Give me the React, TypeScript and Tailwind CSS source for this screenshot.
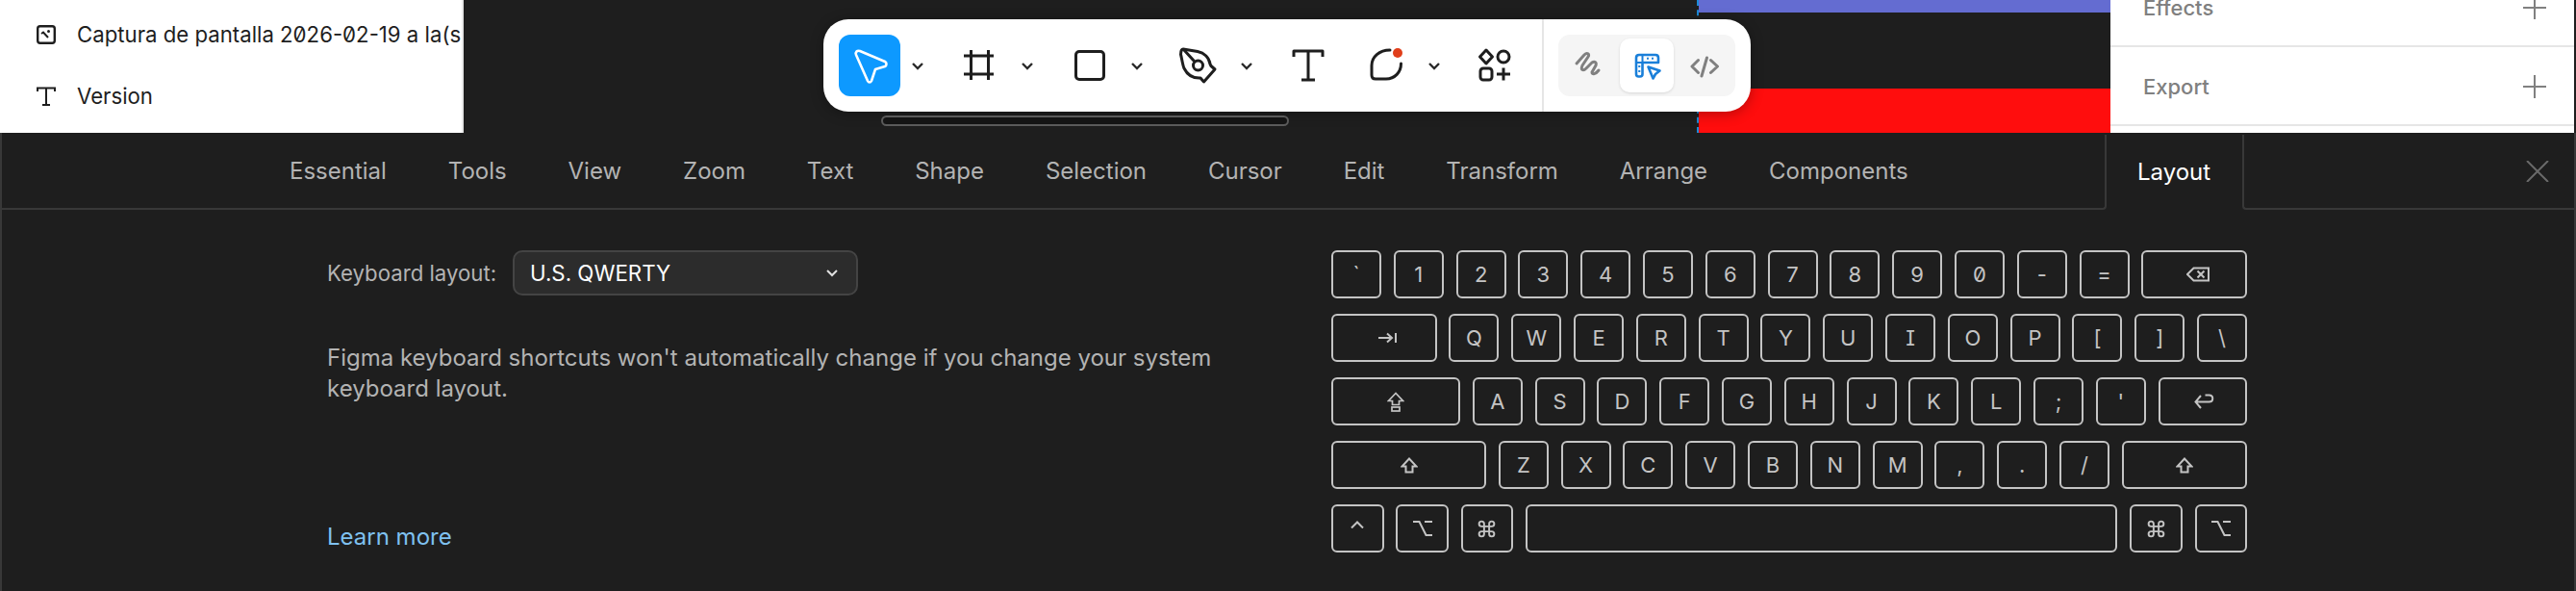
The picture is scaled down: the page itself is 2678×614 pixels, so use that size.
import type { ReactNode } from "react";

const keyFont = "[font-feature-settings:'zero','ss02','cv08']";

const Chevron = ({ stroke = "#2a2a2a", weight = "2.4" }: { stroke?: string; weight?: string }) => (
  <svg width="14" height="9" viewBox="0 0 14 9" fill="none" stroke={stroke} strokeWidth={weight}>
    <path d="M2 2 7 7l5-5" />
  </svg>
);

// 64px toolbar icon box
const ToolIcon = ({ children, stroke = "#1e1e1e" }: { children: ReactNode; stroke?: string }) => (
  <svg width="64" height="64" viewBox="0 0 64 64" fill="none" stroke={stroke} strokeWidth="3" strokeLinecap="round" strokeLinejoin="round">
    {children}
  </svg>
);

const Tool = ({ children, active, chevron }: { children: ReactNode; active?: boolean; chevron?: boolean }) => (
  <div className="flex items-center">
    <div className={`size-16 rounded-[12px] ${active ? "bg-[#0d99ff]" : ""}`}>{children}</div>
    {chevron && (
      <div className="flex w-9 justify-center">
        <Chevron />
      </div>
    )}
  </div>
);

const Toolbar = () => (
  <div className="absolute left-[856px] top-[20px] flex h-[96px] w-[964px] items-center gap-[14px] rounded-[26px] bg-white pl-4 shadow-[0_2px_14px_rgba(0,0,0,0.3)]">
    <Tool active chevron>
      <ToolIcon stroke="#ffffff">
        <path strokeWidth="2.600" d="M18 21c-1-3 1-5 4-4l26 11c2 1 2 4 0 5l-10 3-4 12c-1 2-3 2-4 0z" />
      </ToolIcon>
    </Tool>
    <Tool chevron>
      <ToolIcon>
        <path strokeLinecap="butt" d="M23.500 16v31M41.500 16v31M16 22h31M16 41h31" />
      </ToolIcon>
    </Tool>
    <Tool chevron>
      <ToolIcon>
        <rect x="18.500" y="17.500" width="29" height="29" rx="3.500" />
      </ToolIcon>
    </Tool>
    <Tool chevron>
      <ToolIcon>
        <path d="M16 15l15 2.500c7 1.500 12 6.500 13 13l1 2 4 3.500-11.500 13-3.500-4c-8 .5-14-4-17-10-1.500-3-2.500-11-3.500-14.500 0-3 1-5.500 2.500-5.500z" />
        <path d="M17 16l10 11" />
        <circle cx="31.500" cy="32" r="5" />
      </ToolIcon>
    </Tool>
    <Tool>
      <ToolIcon>
        <path strokeLinecap="butt" d="M17 23v-6h30v6M32 17v30M25 47h14" />
      </ToolIcon>
    </Tool>
    <div className="ml-[3px]">
      <Tool chevron>
        <ToolIcon>
          <path d="M36 16c-11 0-19 7-19 16v10q0 4 4 4h11c9 0 15.500-7 15.500-16" />
          <circle cx="44" cy="19" r="5" fill="#e03e1a" stroke="none" />
        </ToolIcon>
      </Tool>
    </div>
    <Tool>
      <ToolIcon>
        <path d="M22 16l6.500 7-6.500 7-6.500-7z" />
        <circle cx="40" cy="23" r="6" />
        <rect x="16" y="35" width="12" height="12" rx="3" />
        <path strokeLinecap="butt" d="M40 34.500v13M33 41h14" />
      </ToolIcon>
    </Tool>
    <div className="ml-[2px] h-full w-[2px] bg-[#e6e6e6]" />
    <div className="ml-px flex h-16 w-[184px] items-center rounded-[12px] bg-[#f5f5f5]">
      <div className="w-16">
        <ToolIcon stroke="#808080">
          <path d="M19 30l8-9c3-3 6-1 4 2l-6 9c-2 5 1 6 4 3l6-6c3-2 5 0 4 3l-4 7c0 3 4 2 7-2" />
        </ToolIcon>
      </div>
      <div className="flex h-14 w-14 items-center justify-center rounded-[10px] bg-white shadow-[0_1px_3px_rgba(0,0,0,0.12)]">
        <svg width="56" height="56" viewBox="0 0 56 56" fill="none" stroke="#1a7fd9" strokeWidth="2.600" strokeLinecap="round" strokeLinejoin="round">
          <path d="M20 17h17q3 0 3 3v5H23.500v12q0 2.500-2.500 2.500h-1.500q-2.500 0-2.500-2.500V20q0-3 3-3z" />
          <path strokeWidth="2" d="M29 20.500v.5M34 20.500v.5M20 29h.5M20 34h.5M23.500 17v8M17 25h6.500" />
          <path fill="#ffffff" d="M29.500 29.500l12 4-4.500 3.500-2.500 4.500z" />
        </svg>
      </div>
      <div className="w-16">
        <ToolIcon stroke="#808080">
          <path d="M25.500 26.500 19 33l6.500 6.500M38.500 26.500 45.500 33l-7 6.500M34.500 24 29 43" />
        </ToolIcon>
      </div>
    </div>
  </div>
);

const LayerRow = ({ icon, label }: { icon: ReactNode; label: string }) => (
  <div className="flex h-16 items-center gap-[22px] pl-[38px]">
    {icon}
    <span>{label}</span>
  </div>
);

const PanelRow = ({ label, first }: { label: string; first?: boolean }) => (
  <div className={`flex h-[82px] shrink-0 items-center justify-between border-b-2 border-[#e6e6e6] pl-[34px] pr-[29px] pt-[2px] ${first ? "-mt-[33px]" : ""}`}>
    <span>{label}</span>
    <svg width="24" height="24" viewBox="0 0 24 24" stroke="#808080" strokeWidth="2">
      <path d="M12 0v24M0 12h24" />
    </svg>
  </div>
);

const tabs = ["Essential", "Tools", "View", "Zoom", "Text", "Shape", "Selection", "Cursor", "Edit", "Transform", "Arrange", "Components"];

const KeySvg = ({ w, h, children, className }: { w: number; h: number; children: ReactNode; className?: string }) => (
  <svg width={w} height={h} viewBox={`0 0 ${w} ${h}`} fill="none" stroke="currentColor" strokeWidth="2" className={className}>
    {children}
  </svg>
);

const ShiftIcon = () => (
  <KeySvg w={18} h={17}>
    <path d="M9 1.500 1.500 9.500H5.500V15.500H12.500V9.500H16.500z" />
  </KeySvg>
);

const CapsIcon = () => (
  <svg width="18" height="21" viewBox="0 0 18 21" fill="none" stroke="currentColor" strokeWidth="1.700">
    <path d="M9 1.500 1.500 9.500H5.500V13.500H12.500V9.500H16.500z" />
    <rect x="5" y="16" width="8" height="4" />
  </svg>
);

const OptionIcon = () => (
  <KeySvg w={20} h={18}>
    <path d="M0 2h6.500l7 14H20M12 2h8" />
  </KeySvg>
);

const CommandIcon = () => (
  <svg width="21" height="21" viewBox="0 0 24 24" fill="none" stroke="currentColor" strokeWidth="2.200">
    <path d="M15 6v12a3 3 0 1 0 3-3H6a3 3 0 1 0 3 3V6a3 3 0 1 0-3 3h12a3 3 0 1 0-3-3" />
  </svg>
);

const Key = ({ children, className = "w-[52px]" }: { children?: ReactNode; className?: string }) => (
  <div className={`flex h-[50px] items-center justify-center rounded-[6px] border-2 border-[#c4c4c4] text-[22px] leading-none ${className}`}>
    {children}
  </div>
);

const KeyRow = ({ chars }: { chars: string }) => (
  <>
    {chars.split("").map((c) => (
      <Key key={c}>{c}</Key>
    ))}
  </>
);

const Keyboard = () => (
  <div className={`flex w-[952px] flex-col gap-4 text-[#c4c4c4] ${keyFont}`}>
    <div className="flex gap-[12.8px]">
      <KeyRow chars="`1234567890-=" />
      <Key className="flex-1">
        <KeySvg w={24} h={16} className="ml-2">
          <path d="M7.500 1.500H23V14.500H7.500L1 8zM11.500 4.500l7 7M18.500 4.500l-7 7" />
        </KeySvg>
      </Key>
    </div>
    <div className="flex gap-[12.8px]">
      <Key className="flex-1">
        <KeySvg w={20} h={12} className="ml-2">
          <path d="M0 6h14M9 1.500 14 6l-5 4.500M18 1v10" />
        </KeySvg>
      </Key>
      <KeyRow chars="QWERTYUIOP[]\" />
    </div>
    <div className="flex gap-[12.8px]">
      <Key className="w-[134px]">
        <CapsIcon />
      </Key>
      <KeyRow chars="ASDFGHJKL;'" />
      <Key className="flex-1">
        <KeySvg w={22} h={17} className="ml-1">
          <path d="M7 2 1.500 8.500 7 15M1.500 8.500h14c5 0 5-7 0-7h-4" />
        </KeySvg>
      </Key>
    </div>
    <div className="flex gap-[12.8px]">
      <Key className="w-[161px]">
        <ShiftIcon />
      </Key>
      <KeyRow chars="ZXCVBNM,./" />
      <Key className="flex-1">
        <ShiftIcon />
      </Key>
    </div>
    <div className="flex gap-[12.8px]">
      <Key className="w-[54.5px]">
        <KeySvg w={14} h={8} className="-mt-2">
          <path d="M1 7.500 7 1.500l6 6" />
        </KeySvg>
      </Key>
      <Key className="w-[54.5px]">
        <OptionIcon />
      </Key>
      <Key className="w-[54.5px]">
        <CommandIcon />
      </Key>
      <Key className="flex-1" />
      <Key className="w-[54.5px]">
        <CommandIcon />
      </Key>
      <Key className="w-[54.5px]">
        <OptionIcon />
      </Key>
    </div>
  </div>
);

export default function App() {
  return (
    <div className="relative flex h-[614px] w-[2678px] flex-col overflow-hidden bg-[#1e1e1e] font-[Inter,sans-serif]">
      <div className="flex h-[138px] shrink-0 pr-[2px]">
        <div className="w-[482px] shrink-0 overflow-hidden whitespace-nowrap border-r-2 border-[#e6e6e6] bg-white pt-1 text-[22.200px] text-[#1e1e1e] [font-feature-settings:'zero']">
          <LayerRow
            label="Captura de pantalla 2026-02-19 a la(s) 12.31.05"
            icon={
              <svg width="20" height="20" viewBox="0 0 20 20" fill="none" stroke="#1e1e1e" strokeWidth="2.400" className="shrink-0">
                <rect x="1.200" y="1.200" width="17.600" height="17.600" rx="2.500" />
                <path strokeWidth="2" d="M5 9l2-1.500 5 5.500" />
                <circle cx="12.500" cy="6.500" r="1.500" fill="#1e1e1e" stroke="none" />
              </svg>
            }
          />
          <LayerRow
            label="Version"
            icon={
              <svg width="20" height="20" viewBox="0 0 20 20" fill="none" stroke="#1e1e1e" strokeWidth="2" className="shrink-0">
                <path d="M1 5V1.500h18V5M10 1.500V19M6 19h8" />
              </svg>
            }
          />
        </div>
        <div className="flex-1 pl-[1282px]">
          <div className="flex h-full flex-col justify-between border-l-2 border-dashed border-[#1a8ad8]">
            <div className="h-[13px] bg-[#646cd1]" />
            <div className="h-[46px] bg-[#ff0d0d]" />
          </div>
        </div>
        <div className="flex w-[482px] shrink-0 flex-col overflow-hidden bg-white text-[22px] font-medium text-[#808080]">
          <PanelRow label="Effects" first />
          <PanelRow label="Export" />
        </div>
      </div>

      <Toolbar />
      <div className="absolute left-[916px] top-[120px] h-[11px] w-[424px] rounded-full border-2 border-[#5a5a5a] bg-[#141414]" />

      <div className="flex flex-1 flex-col border-x-2 border-[#383838]">
        <div className="mt-[2px] flex h-[78px] shrink-0 text-[24px] text-[#b3b3b3]">
          <div className="flex w-[2188px] items-center gap-[63.900px] rounded-br-[4px] border-b-2 border-r-2 border-[#383838] pl-[299px]">
            {tabs.map((t) => (
              <span key={t}>{t}</span>
            ))}
          </div>
          <div className="flex w-[141px] items-center pl-[32px] text-white">Layout</div>
          <div className="flex flex-1 items-center justify-end rounded-bl-[4px] border-b-2 border-l-2 border-[#383838] pr-[26px]">
            <svg width="24" height="22" viewBox="0 0 24 22" stroke="#6a6a6a" strokeWidth="2">
              <path d="M1 0l22 22M23 0 1 22" />
            </svg>
          </div>
        </div>

        <div className="flex flex-1 justify-between pl-[338px] pr-[340px] pt-[42px]">
          <div className="flex w-[960px] flex-col pb-[40px] text-[24px] leading-[32px] text-[#b3b3b3]">
            <div className="flex items-center gap-[17px]">
              <span className="text-[22.200px]">Keyboard layout:</span>
              <div className="flex h-[47px] w-[359px] items-center justify-between rounded-[10px] border-2 border-[#444444] bg-[#2c2c2c] pl-4 pr-[18px] text-[22.300px] text-white">
                <span>U.S. QWERTY</span>
                <Chevron stroke="#e0e0e0" weight="2" />
              </div>
            </div>
            <p className="mt-[49px]">
              Figma keyboard shortcuts won't automatically change if you change your system keyboard layout.
            </p>
            <a className="mt-auto text-[#7fc1f0]">Learn more</a>
          </div>
          <Keyboard />
        </div>
      </div>
    </div>
  );
}
